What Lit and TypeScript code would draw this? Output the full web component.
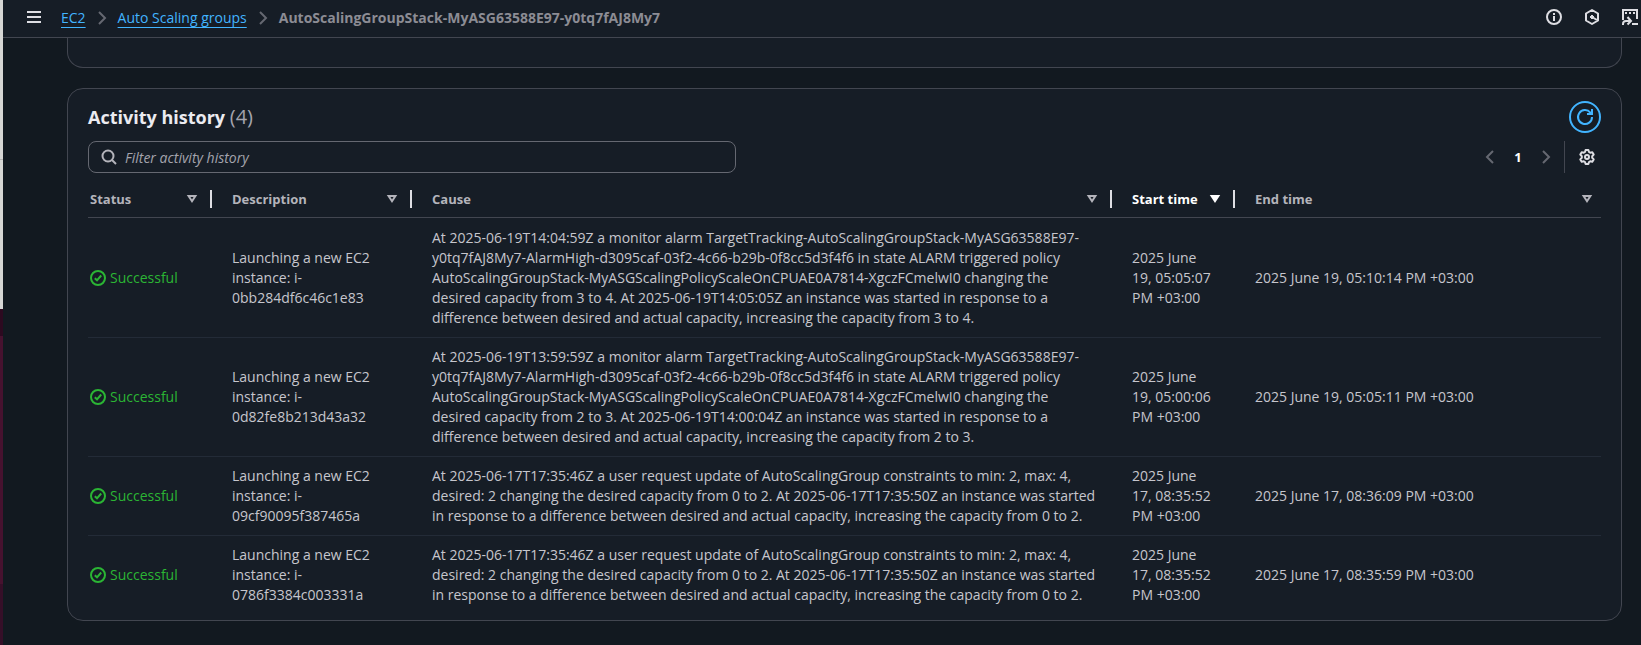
import { LitElement, html, css, svg, nothing } from "lit";
import { customElement, property } from "lit/decorators.js";
import { classMap } from "lit/directives/class-map.js";

interface Activity {
  status: string;
  description: string;
  cause: string;
  start: string;
  end: string;
}

interface Column {
  key: string;
  label: string;
  sorted?: boolean;
}

const COLUMNS: Column[] = [
  { key: "status", label: "Status" },
  { key: "description", label: "Description" },
  { key: "cause", label: "Cause" },
  { key: "start", label: "Start time", sorted: true },
  { key: "end", label: "End time" },
];

const ACTIVITIES: Activity[] = [
  {
    status: "Successful",
    description: "Launching a new EC2\ninstance: i-\n0bb284df6c46c1e83",
    cause:
      "At 2025-06-19T14:04:59Z a monitor alarm TargetTracking-AutoScalingGroupStack-MyASG63588E97-\ny0tq7fAJ8My7-AlarmHigh-d3095caf-03f2-4c66-b29b-0f8cc5d3f4f6 in state ALARM triggered policy\nAutoScalingGroupStack-MyASGScalingPolicyScaleOnCPUAE0A7814-XgczFCmelwI0 changing the\ndesired capacity from 3 to 4. At 2025-06-19T14:05:05Z an instance was started in response to a\ndifference between desired and actual capacity, increasing the capacity from 3 to 4.",
    start: "2025 June\n19, 05:05:07\nPM +03:00",
    end: "2025 June 19, 05:10:14 PM +03:00",
  },
  {
    status: "Successful",
    description: "Launching a new EC2\ninstance: i-\n0d82fe8b213d43a32",
    cause:
      "At 2025-06-19T13:59:59Z a monitor alarm TargetTracking-AutoScalingGroupStack-MyASG63588E97-\ny0tq7fAJ8My7-AlarmHigh-d3095caf-03f2-4c66-b29b-0f8cc5d3f4f6 in state ALARM triggered policy\nAutoScalingGroupStack-MyASGScalingPolicyScaleOnCPUAE0A7814-XgczFCmelwI0 changing the\ndesired capacity from 2 to 3. At 2025-06-19T14:00:04Z an instance was started in response to a\ndifference between desired and actual capacity, increasing the capacity from 2 to 3.",
    start: "2025 June\n19, 05:00:06\nPM +03:00",
    end: "2025 June 19, 05:05:11 PM +03:00",
  },
  {
    status: "Successful",
    description: "Launching a new EC2\ninstance: i-\n09cf90095f387465a",
    cause:
      "At 2025-06-17T17:35:46Z a user request update of AutoScalingGroup constraints to min: 2, max: 4,\ndesired: 2 changing the desired capacity from 0 to 2. At 2025-06-17T17:35:50Z an instance was started\nin response to a difference between desired and actual capacity, increasing the capacity from 0 to 2.",
    start: "2025 June\n17, 08:35:52\nPM +03:00",
    end: "2025 June 17, 08:36:09 PM +03:00",
  },
  {
    status: "Successful",
    description: "Launching a new EC2\ninstance: i-\n0786f3384c003331a",
    cause:
      "At 2025-06-17T17:35:46Z a user request update of AutoScalingGroup constraints to min: 2, max: 4,\ndesired: 2 changing the desired capacity from 0 to 2. At 2025-06-17T17:35:50Z an instance was started\nin response to a difference between desired and actual capacity, increasing the capacity from 0 to 2.",
    start: "2025 June\n17, 08:35:52\nPM +03:00",
    end: "2025 June 17, 08:35:59 PM +03:00",
  },
];

const GLYPHS = {
  menu: svg`<path d="M1 3h14M1 8h14M1 13h14" />`,
  right: svg`<path d="M5 2l6 6-6 6" />`,
  left: svg`<path d="M11 2L5 8l6 6" />`,
  info: svg`<circle cx="8" cy="8" r="7" /><path d="M8 7v5M8 4v2" />`,
  hexagon: svg`<path d="M8 1l6 3.5v7L8 15l-6-3.5v-7z" stroke-linejoin="round" /><path d="M8 6L10 8 8 10 6 8z" fill="currentColor" stroke-width="1" /><path d="M8 8l5 3" />`,
  terminal: svg`<path d="M1 11V1h14v9" /><path d="M3 4h2M7 4h2M11 4h2" /><path d="M10 15h6" /><path d="M1 16v-1q0-3 3-3h4M5.500 8L9 12l-3.500 3.500" />`,
  search: svg`<circle cx="7" cy="7" r="5.500" /><path d="M11 11l4 4" />`,
  refresh: svg`<path d="M15 8a7 7 0 1 1-1.600-4.400L14.500 5" /><path d="M10 5h5V0" />`,
  gear: svg`<path stroke-linejoin="round" d="M6.600 1h2.800l.6 2 1.200.7 2.100-.5 1.400 2.400L13.200 7.200v1.600l1.500 1.600-1.400 2.400-2.100-.5-1.200.7-.6 2H6.600l-.6-2-1.200-.7-2.100.5-1.400-2.400L2.800 8.800V7.200L1.300 5.600l1.400-2.400 2.100.5L6 3z" /><circle cx="8" cy="8" r="2" />`,
  check: svg`<circle cx="8" cy="8" r="7" /><path d="M4.800 8.200l2.200 2.100 4.200-4.800" />`,
  sort: svg`<path d="M4.600 5h6.800L8 10.200z" />`,
  sorted: svg`<path fill="currentColor" d="M4.600 5h6.800L8 10.200z" />`,
};

@customElement("ui-icon")
class UiIcon extends LitElement {
  @property() name: keyof typeof GLYPHS = "menu";

  static styles = css`
    :host {
      display: block;
      flex: none;
      width: 16px;
      height: 16px;
    }
    .glyph {
      display: block;
      width: 100%;
      height: 100%;
      overflow: visible;
      fill: none;
      stroke: currentColor;
      stroke-width: 2;
    }
  `;

  render() {
    return html`<svg class="glyph" viewBox="0 0 16 16" aria-hidden="true">${GLYPHS[this.name]}</svg>`;
  }
}

@customElement("activity-table")
class ActivityTable extends LitElement {
  static styles = css`
    :host {
      display: block;
    }
    .table {
      width: 100%;
      table-layout: fixed;
      border-collapse: separate;
      border-spacing: 0;
    }
    .col-status { width: 124px; }
    .col-description { width: 200px; }
    .col-cause { width: 700px; }
    .col-start { width: 123px; }
    .head {
      padding: 0;
      border-bottom: 1px solid #424650;
      text-align: left;
    }
    .head-inner {
      display: flex;
      align-items: center;
      height: 36px;
      padding-left: 20px;
    }
    .head.status .head-inner {
      padding-left: 2px;
    }
    .sort {
      flex: 1;
      display: flex;
      align-items: center;
      justify-content: space-between;
      padding: 0;
      border: 0;
      background: none;
      color: #b4b4bb;
      font: 700 13px/20px "Open Sans", "Noto Sans", sans-serif;
      cursor: pointer;
    }
    .sort.active {
      color: #ffffff;
    }
    .head.end .sort {
      padding-right: 6px;
    }
    .resizer {
      width: 2px;
      height: 18px;
      margin-left: 10px;
      background: #dedee3;
    }
    .cell {
      padding: 9px 0 9px 20px;
      border-bottom: 1px solid #232b37;
      vertical-align: middle;
      white-space: pre-line;
    }
    .cell.status {
      padding-left: 2px;
    }
    .row:first-child .cell {
      padding-top: 10px;
    }
    .row:last-child .cell {
      border-bottom: 0;
    }
    .state {
      display: flex;
      align-items: center;
      gap: 4px;
      color: #2bb534;
    }
  `;

  render() {
    return html`<table class="table" aria-label="Activity history">
      <colgroup>
        ${COLUMNS.map((c) => html`<col class="col-${c.key}" />`)}
      </colgroup>
      <thead>
        <tr>
          ${COLUMNS.map(
            (c, i) => html`<th class="head ${c.key}" scope="col" aria-sort=${c.sorted ? "descending" : "none"}>
              <div class="head-inner">
                <button class=${classMap({ sort: true, active: !!c.sorted })} type="button">
                  <span>${c.label}</span>
                  <ui-icon name=${c.sorted ? "sorted" : "sort"}></ui-icon>
                </button>
                ${i < COLUMNS.length - 1 ? html`<span class="resizer"></span>` : nothing}
              </div>
            </th>`
          )}
        </tr>
      </thead>
      <tbody>
        ${ACTIVITIES.map(
          (a) => html`<tr class="row">
            <td class="cell status"><div class="state"><ui-icon name="check"></ui-icon><span>${a.status}</span></div></td>
            <td class="cell">${a.description}</td>
            <td class="cell">${a.cause}</td>
            <td class="cell">${a.start}</td>
            <td class="cell">${a.end}</td>
          </tr>`
        )}
      </tbody>
    </table>`;
  }
}

@customElement("app-root")
class AppRoot extends LitElement {
  static styles = css`
    :host {
      display: flex;
      min-height: 100vh;
      background: #121920;
      color: #c6c6cd;
      font: 400 14px/20px "Open Sans", "Noto Sans", sans-serif;
    }
    .desktop-edge {
      flex: none;
      width: 3px;
      background: linear-gradient(
        #d6d6d4 0 159px,
        #b4b4b2 159px 160px,
        #d6d6d4 160px 309px,
        #2c0a20 309px 336px,
        #46122f 336px 584px,
        #350f28 584px
      );
    }
    .page {
      flex: 1;
      min-width: 0;
    }
    .topbar {
      display: flex;
      align-items: center;
      box-sizing: border-box;
      height: 38px;
      padding: 0 3px 3px 24px;
      background: #161d26;
      border-bottom: 1px solid #424650;
    }
    .icon-button {
      display: flex;
      align-items: center;
      justify-content: center;
      padding: 0;
      border: 0;
      background: none;
      color: #dedee3;
      cursor: pointer;
    }
    .icon-button.small {
      width: 14px;
    }
    .trail {
      display: flex;
      align-items: center;
      gap: 8px;
      flex: 1;
      margin: 0 0 0 20px;
      padding: 2px 0 0;
      list-style: none;
    }
    .crumb {
      display: flex;
      align-items: center;
      gap: 8px;
      color: #656871;
    }
    .link {
      color: #42b4ff;
      text-underline-offset: 4px;
      text-decoration-thickness: 1px;
    }
    .current {
      color: #8c8c94;
      font-weight: 700;
    }
    .tools {
      display: flex;
      gap: 22px;
    }
    .content {
      display: flex;
      flex-direction: column;
      gap: 20px;
      padding: 0 19px 24px 64px;
    }
    .card {
      padding: 12px 20px 6px;
      background: #161d26;
      border: 1px solid #424650;
      border-radius: 16px;
    }
    .card.previous {
      padding: 0;
      height: 29px;
      border-top: 0;
      border-top-left-radius: 0;
      border-top-right-radius: 0;
    }
    .bar {
      display: flex;
      align-items: center;
      justify-content: space-between;
      margin-bottom: 8px;
    }
    .title {
      margin: 0;
      color: #ebebf0;
      font-size: 18px;
      line-height: 24px;
      font-weight: 700;
    }
    .count {
      color: #a4a4ad;
      font-size: 20px;
      font-weight: 400;
    }
    .refresh {
      width: 32px;
      height: 32px;
      border: 2px solid #42b4ff;
      border-radius: 50%;
      color: #42b4ff;
    }
    .filter {
      display: flex;
      align-items: center;
      gap: 8px;
      box-sizing: border-box;
      width: 648px;
      height: 32px;
      padding: 0 12px;
      border: 1px solid #656871;
      border-radius: 8px;
      color: #b4b4bb;
    }
    .filter-input {
      flex: 1;
      min-width: 0;
      padding: 2px 0 0;
      border: 0;
      outline: 0;
      background: none;
      color: #c6c6cd;
      font: inherit;
    }
    .filter-input::placeholder {
      color: #a4a4ad;
      font-style: italic;
      opacity: 1;
    }
    .pager {
      display: flex;
      align-items: center;
      height: 32px;
    }
    .pager .icon-button {
      width: 28px;
      height: 28px;
    }
    .pager .arrow {
      color: #656871;
    }
    .pager .number {
      color: #ffffff;
      font: 700 13px/20px "Open Sans", "Noto Sans", sans-serif;
    }
    .rule {
      width: 1px;
      height: 32px;
      margin: 0 8px 0 4px;
      background: #424650;
    }
  `;

  render() {
    return html`
      <div class="desktop-edge"></div>
      <div class="page">
        <header class="topbar">
          <button class="icon-button small" type="button" aria-label="Open navigation"><ui-icon name="menu"></ui-icon></button>
          <ol class="trail">
            <li class="crumb"><a class="link" href="#ec2">EC2</a><ui-icon name="right"></ui-icon></li>
            <li class="crumb"><a class="link" href="#groups">Auto Scaling groups</a><ui-icon name="right"></ui-icon></li>
            <li class="crumb"><span class="current">AutoScalingGroupStack-MyASG63588E97-y0tq7fAJ8My7</span></li>
          </ol>
          <div class="tools">
            <button class="icon-button" type="button" aria-label="Info"><ui-icon name="info"></ui-icon></button>
            <button class="icon-button" type="button" aria-label="Assistant"><ui-icon name="hexagon"></ui-icon></button>
            <button class="icon-button" type="button" aria-label="Shell"><ui-icon name="terminal"></ui-icon></button>
          </div>
        </header>
        <main class="content">
          <section class="card previous"></section>
          <section class="card">
            <div class="bar">
              <h2 class="title">Activity history <span class="count">(4)</span></h2>
              <button class="icon-button refresh" type="button" aria-label="Refresh"><ui-icon name="refresh"></ui-icon></button>
            </div>
            <div class="bar">
              <label class="filter">
                <ui-icon name="search"></ui-icon>
                <input class="filter-input" type="text" placeholder="Filter activity history" aria-label="Filter activity history" />
              </label>
              <div class="pager">
                <button class="icon-button arrow" type="button" aria-label="Previous page"><ui-icon name="left"></ui-icon></button>
                <button class="icon-button number" type="button">1</button>
                <button class="icon-button arrow" type="button" aria-label="Next page"><ui-icon name="right"></ui-icon></button>
                <span class="rule"></span>
                <button class="icon-button" type="button" aria-label="Preferences"><ui-icon name="gear"></ui-icon></button>
              </div>
            </div>
            <activity-table></activity-table>
          </section>
        </main>
      </div>
    `;
  }
}
